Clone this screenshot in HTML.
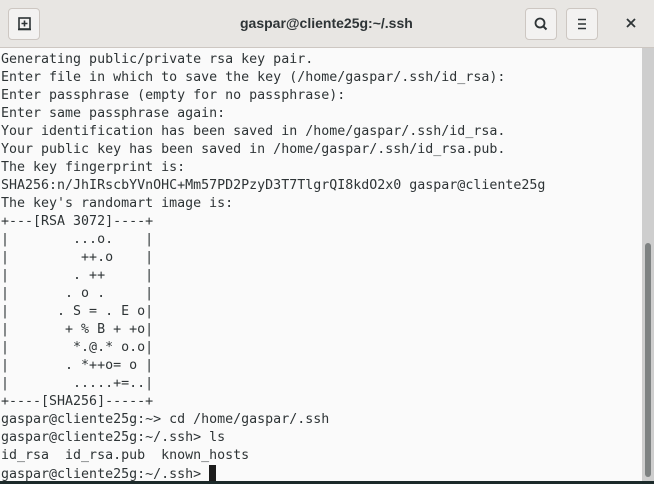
<!DOCTYPE html>
<html><head><meta charset="utf-8"><style>
html,body{margin:0;padding:0;width:654px;height:484px;overflow:hidden;background:#fafafa}
.hdr{position:absolute;left:0;top:0;width:654px;height:48px;background:#e8e6e3;border-bottom:1px solid #cdc7c2;box-sizing:border-box}
.btn{position:absolute;top:8px;height:32px;width:32px;background:#f3f2f1;border:1px solid #cdc7c2;border-radius:4px;box-sizing:border-box}
.title{position:absolute;left:240px;top:15px;white-space:nowrap;font:bold 14px "Liberation Sans",sans-serif;color:#2e3436}
pre{position:absolute;left:1px;top:51px;margin:0;font:13.3px/18px "DejaVu Sans Mono","Liberation Mono",monospace;color:#2e3436}
.track{position:absolute;left:642px;top:48px;width:12px;height:433px;background:#cecece}
.thumb{position:absolute;left:645px;top:243px;width:6px;height:234px;background:#7e8282;border-radius:3px}
.bot{position:absolute;left:0;top:481px;width:654px;height:3px;background:#1c2a2a}
.cur{display:inline-block;width:7px;height:17px;background:#1c1c1c;vertical-align:-4px}
</style></head><body>
<div class="hdr">
<div class="btn" style="left:8px"><svg width="30" height="30" viewBox="0 0 30 30"><rect x="10" y="9" width="11" height="11" fill="none" stroke="#2e3436" stroke-width="1.6"/><path d="M15.5 11.5v6M12.5 14.5h6" stroke="#2e3436" stroke-width="1.6"/><path d="M9 20.5h13" stroke="#2e3436" stroke-width="1.6"/></svg></div>
<div class="title">gaspar@cliente25g:~/.ssh</div>
<div class="btn" style="left:525px"><svg width="30" height="30" viewBox="0 0 30 30"><circle cx="14" cy="14" r="4.5" fill="none" stroke="#2e3436" stroke-width="1.8"/><path d="M17 17l3.5 3.5" stroke="#2e3436" stroke-width="2"/></svg></div>
<div class="btn" style="left:566px"><svg width="30" height="30" viewBox="0 0 30 30"><path d="M11 10.5h8M11 15h8M11 19.5h8" stroke="#2e3436" stroke-width="1.6"/></svg></div>
<svg style="position:absolute;left:624px;top:16px" width="14" height="14" viewBox="0 0 14 14"><path d="M3 3l8 8M11 3l-8 8" stroke="#2e3436" stroke-width="1.8"/></svg>
</div>
<pre>Generating public/private rsa key pair.
Enter file in which to save the key (/home/gaspar/.ssh/id_rsa):
Enter passphrase (empty for no passphrase):
Enter same passphrase again:
Your identification has been saved in /home/gaspar/.ssh/id_rsa.
Your public key has been saved in /home/gaspar/.ssh/id_rsa.pub.
The key fingerprint is:
SHA256:n/JhIRscbYVnOHC+Mm57PD2PzyD3T7TlgrQI8kdO2x0 gaspar@cliente25g
The key's randomart image is:
+---[RSA 3072]----+
|        ...o.    |
|         ++.o    |
|        . ++     |
|       . o .     |
|      . S = . E o|
|       + % B + +o|
|        *.@.* o.o|
|       . *++o= o |
|        .....+=..|
+----[SHA256]-----+
gaspar@cliente25g:~&gt; cd /home/gaspar/.ssh
gaspar@cliente25g:~/.ssh&gt; ls
id_rsa  id_rsa.pub  known_hosts
gaspar@cliente25g:~/.ssh&gt; <span class="cur"></span></pre>
<div class="track"></div><div class="thumb"></div>
<div class="bot"></div>
</body></html>
